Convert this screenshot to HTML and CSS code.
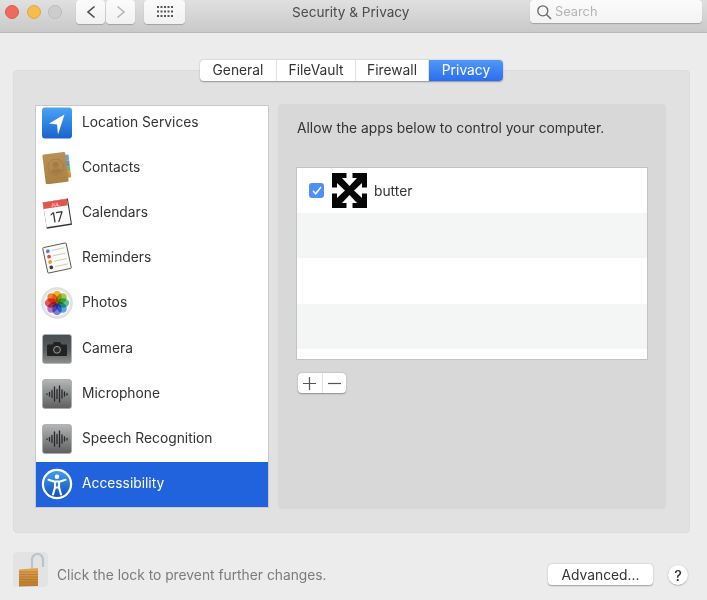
FILE: index.html
```html
<!DOCTYPE html>
<html lang="en">
<head>
<meta charset="utf-8">
<title>Security &amp; Privacy</title>
<link rel="stylesheet" href="styles.css">
</head>
<body>
<svg class="defs" width="0" height="0" aria-hidden="true">
  <defs>
    <linearGradient id="gBlue" x1="0" y1="0" x2="0" y2="1"><stop offset="0" stop-color="#4aa3f4"/><stop offset="1" stop-color="#1a62cf"/></linearGradient>
    <linearGradient id="gBook" x1="0" y1="0" x2="0" y2="1"><stop offset="0" stop-color="#b89159"/><stop offset="1" stop-color="#ab8143"/></linearGradient>
    <linearGradient id="gCam" x1="0" y1="0" x2="0" y2="1"><stop offset="0" stop-color="#474e52"/><stop offset=".55" stop-color="#5a5c5d"/><stop offset="1" stop-color="#8e8e8e"/></linearGradient>
    <linearGradient id="gMic" x1="0" y1="0" x2="0" y2="1"><stop offset="0" stop-color="#b4b6b7"/><stop offset="1" stop-color="#5e5e5e"/></linearGradient>
    <linearGradient id="gAcc" x1="0" y1="0" x2="0" y2="1"><stop offset="0" stop-color="#3f9bf2"/><stop offset="1" stop-color="#1552b8"/></linearGradient>
    <linearGradient id="gLock" x1="0" y1="0" x2="0" y2="1"><stop offset="0" stop-color="#e6a753"/><stop offset="1" stop-color="#b87a2c"/></linearGradient>
    <symbol id="mic" viewBox="0 0 32 32">
      <rect x="1.500" y="1.500" width="29" height="29" rx="2.500" fill="url(#gMic)" stroke="#a3a9ac" stroke-width=".8"/>
      <path d="M6 16v.5M8.500 14.500v3.500M11 12.500v7M13.500 9v14M16 11.500v9M18.500 8v16M21 12v8M23.500 14v4M26 15.500v1.500" stroke="#25282a" stroke-width="1.300" stroke-linecap="round" fill="none"/>
    </symbol>
  </defs>
</svg>

<div class="window">
  <header class="titlebar">
    <div class="lights">
      <span class="light red"></span>
      <span class="light yellow"></span>
      <span class="light grey"></span>
    </div>
    <div class="nav">
      <span class="tbtn nav-btn">
        <svg width="10" height="14" viewBox="0 0 10 14"><path d="M8.500 1.500 2 7l6.500 5.500" fill="none" stroke="#4a4a4a" stroke-width="1.600"/></svg>
      </span>
      <span class="tbtn nav-btn">
        <svg width="10" height="14" viewBox="0 0 10 14"><path d="M1.500 1.500 8 7l-6.500 5.500" fill="none" stroke="#b5b5b5" stroke-width="1.600"/></svg>
      </span>
    </div>
    <span class="tbtn grid-btn">
      <svg width="16" height="12" viewBox="0 0 16 12" fill="#555"><rect x="0" y="0" width="2" height="2"/><rect x="3.500" y="0" width="2" height="2"/><rect x="7" y="0" width="2" height="2"/><rect x="10.500" y="0" width="2" height="2"/><rect x="14" y="0" width="2" height="2"/><rect x="0" y="4.500" width="2" height="2"/><rect x="3.500" y="4.500" width="2" height="2"/><rect x="7" y="4.500" width="2" height="2"/><rect x="10.500" y="4.500" width="2" height="2"/><rect x="14" y="4.500" width="2" height="2"/><rect x="0" y="9" width="2" height="2"/><rect x="3.500" y="9" width="2" height="2"/><rect x="7" y="9" width="2" height="2"/><rect x="10.500" y="9" width="2" height="2"/><rect x="14" y="9" width="2" height="2"/></svg>
    </span>
    <h1 class="title">Security &amp; Privacy</h1>
    <div class="search">
      <svg width="16" height="16" viewBox="0 0 16 16"><circle cx="6.800" cy="6.800" r="5" fill="none" stroke="#666" stroke-width="1.300"/><path d="m10.500 10.500 4.500 4.500" stroke="#666" stroke-width="1.400"/></svg>
      <span>Search</span>
    </div>
  </header>

  <main class="content">
    <nav class="tabs">
      <span class="tab tab-general">General</span>
      <span class="tab tab-filevault">FileVault</span>
      <span class="tab tab-firewall">Firewall</span>
      <span class="tab tab-active">Privacy</span>
    </nav>

    <section class="panel">
      <div class="list">
        <ul class="list-inner">
          <li class="item">
            <svg class="icon" viewBox="0 0 32 32"><rect x="1" y=".5" width="30" height="31" rx="3" fill="url(#gBlue)"/><path d="M8 16.500 23.500 7.500 17 27.500l-1-10z" fill="#fff"/></svg>
            <span class="label">Location Services</span>
          </li>
          <li class="item">
            <svg class="icon" viewBox="0 0 32 32"><g transform="rotate(-7 16 16)"><path d="M25 4h4v6h-4z" fill="#6fa3c4"/><path d="M25 10h4v6h-4z" fill="#5f96b8"/><path d="M25 16h4v5h-4z" fill="#7bb05a"/><path d="M25 21h4v6h-4z" fill="#d98f35"/><rect x="3" y="1" width="23" height="30" rx="1.500" fill="url(#gBook)"/><circle cx="15" cy="15" r="8" fill="none" stroke="#a07c47" stroke-width=".8"/><circle cx="15" cy="12.500" r="3" fill="#a07c47"/><path d="M9.500 19.500c1-4 10-4 11 0a8 8 0 0 1-11 0z" fill="#a07c47"/></g></svg>
            <span class="label">Contacts</span>
          </li>
          <li class="item">
            <svg class="icon" viewBox="0 0 32 32"><g transform="rotate(-9 16 16)"><rect x="3.500" y="3.500" width="25.500" height="26.500" fill="#333"/><rect x="3.500" y="3.500" width="24.500" height="25" fill="#fbfbfb"/><rect x="3.500" y="3.500" width="24.500" height="6.500" fill="#e0554c"/><text x="15.500" y="9" class="cal-mon" text-anchor="middle">JUL</text><text x="15.500" y="25" class="cal-day" text-anchor="middle">17</text></g></svg>
            <span class="label">Calendars</span>
          </li>
          <li class="item">
            <svg class="icon" viewBox="0 0 32 32"><g transform="rotate(-12 16 16)"><rect x="4" y="3" width="24" height="26" rx="1" fill="#fbfbf6" stroke="#3f3f3f" stroke-width=".8"/><circle cx="8.500" cy="7.500" r="1.900" fill="#3d84ee"/><circle cx="8.500" cy="13" r="1.900" fill="#e8483c"/><circle cx="8.500" cy="18.500" r="1.900" fill="#eb9a30"/><circle cx="8.500" cy="24" r="1.900" fill="#3a3d44"/><path d="M12.500 7.500h13M12.500 13h13M12.500 18.500h13M12.500 24h13" stroke="#bbb" stroke-width=".7"/></g></svg>
            <span class="label">Reminders</span>
          </li>
          <li class="item">
            <svg class="icon" viewBox="0 0 32 32"><circle cx="16" cy="16" r="15.500" fill="#e4e4e4" stroke="#d0d0d0" stroke-width=".5"/><circle cx="16" cy="16" r="13" fill="#f8f8f8"/><ellipse class="petal" cx="16" cy="9.800" rx="4.700" ry="6" fill="#f7b731"/><ellipse class="petal" cx="16" cy="9.800" rx="4.700" ry="6" fill="#a4cf4a" transform="rotate(45 16 16)"/><ellipse class="petal" cx="16" cy="9.800" rx="4.700" ry="6" fill="#62c69c" transform="rotate(90 16 16)"/><ellipse class="petal" cx="16" cy="9.800" rx="4.700" ry="6" fill="#55aee6" transform="rotate(135 16 16)"/><ellipse class="petal" cx="16" cy="9.800" rx="4.700" ry="6" fill="#7b87dc" transform="rotate(180 16 16)"/><ellipse class="petal" cx="16" cy="9.800" rx="4.700" ry="6" fill="#b47ccc" transform="rotate(225 16 16)"/><ellipse class="petal" cx="16" cy="9.800" rx="4.700" ry="6" fill="#ea5a5c" transform="rotate(270 16 16)"/><ellipse class="petal" cx="16" cy="9.800" rx="4.700" ry="6" fill="#f2873a" transform="rotate(315 16 16)"/></svg>
            <span class="label">Photos</span>
          </li>
          <li class="item">
            <svg class="icon" viewBox="0 0 32 32"><rect x="1.500" y="1.500" width="29" height="29" rx="2.500" fill="url(#gCam)" stroke="#a8b6bd" stroke-width=".8"/><path d="M7 11.500h4.500L13 9h6l1.500 2.500H25a1 1 0 0 1 1 1V22a1 1 0 0 1-1 1H7a1 1 0 0 1-1-1v-9.500a1 1 0 0 1 1-1z" fill="#222"/><circle cx="16" cy="16.800" r="3.400" fill="#2c2c2c" stroke="#9a9a9a" stroke-width="1"/></svg>
            <span class="label">Camera</span>
          </li>
          <li class="item">
            <svg class="icon"><use href="#mic"/></svg>
            <span class="label">Microphone</span>
          </li>
          <li class="item">
            <svg class="icon"><use href="#mic"/></svg>
            <span class="label">Speech Recognition</span>
          </li>
          <li class="item item-selected">
            <svg class="icon" viewBox="0 0 32 32"><circle cx="16" cy="16" r="15.200" fill="#fff"/><circle cx="16" cy="16" r="13" fill="url(#gAcc)"/><circle cx="16" cy="8.800" r="2.300" fill="#fff"/><path d="M7.500 11.800 13 13.500h6l5.500-1.700M14 13.500v6l-2 7M18 13.500v6l2 7M14 19.500h4" stroke="#fff" stroke-width="2.100" fill="none" stroke-linecap="round" stroke-linejoin="round"/></svg>
            <span class="label">Accessibility</span>
          </li>
        </ul>
      </div>

      <div class="detail">
        <p class="detail-text">Allow the apps below to control your computer.</p>
        <div class="table">
          <div class="row row-app">
            <span class="check">
              <svg width="10" height="9" viewBox="0 0 10 9"><path d="M1 4.800 3.700 7.800 9 1" fill="none" stroke="#fff" stroke-width="1.500"/></svg>
            </span>
            <svg class="app-icon" viewBox="0 0 35 35"><rect width="35" height="35" fill="#050505"/><g fill="#fff"><path d="M0 14.500h5V10l8 7.500-8 7.500v-4.500H0z"/><path d="M35 14.500h-5V10l-8 7.500 8 7.500v-4.500h5z"/><path d="M14.500 0v5H10l7.500 8L25 5h-4.500V0z"/><path d="M14.500 35v-5H10l7.500-8 7.500 8h-4.500v5z"/></g></svg>
            <span>butter</span>
          </div>
          <div class="row row-alt"></div>
          <div class="row"></div>
          <div class="row row-alt"></div>
          <div class="row row-end"></div>
        </div>
        <div class="addremove">
          <span class="ar-btn">
            <svg width="13" height="13" viewBox="0 0 13 13"><path d="M6.500 0v13M0 6.500h13" stroke="#555" stroke-width="1.200"/></svg>
          </span>
          <span class="ar-btn">
            <svg width="13" height="13" viewBox="0 0 13 13"><path d="M0 6.500h13" stroke="#555" stroke-width="1.200"/></svg>
          </span>
        </div>
      </div>
    </section>

    <footer class="footer">
      <span class="lock">
        <svg width="35" height="35" viewBox="0 0 35 35"><path d="M19 17V7.500a5.500 5.500 0 0 1 11 0V15" fill="none" stroke="#b9c4cb" stroke-width="2.200"/><path d="M6 17.500 25 16v18l-19 .5z" fill="url(#gLock)"/><path d="M6 20h19M6 22.500h19M6 25h19M6 27.500h19M6 30h19" stroke="#a86f28" stroke-width=".6"/></svg>
      </span>
      <span class="lock-text">Click the lock to prevent further changes.</span>
      <span class="advanced">Advanced...</span>
      <span class="help">?</span>
    </footer>
  </main>
</div>
</body>
</html>
```

FILE: styles.css
```css
* { box-sizing: border-box; }
html, body { margin: 0; padding: 0; }
body {
  width: 707px;
  height: 600px;
  overflow: hidden;
  background: #ececec;
  font-family: "Inter", "Liberation Sans", sans-serif;
  color: #333;
}
.defs { display: block; height: 0; }
.window { display: flex; flex-direction: column; height: 600px; }

.titlebar {
  height: 33px;
  flex: none;
  display: flex;
  align-items: flex-start;
  padding: 0 5px;
  background: linear-gradient(#e0e0e0, #c9c9c9);
  border-bottom: 1px solid #b8b8b8;
}
.lights { display: flex; gap: 7.5px; width: 71px; margin-top: 5px; }
.light { width: 14px; height: 14px; border-radius: 50%; }
.red { background: #ee6a5f; border: 1px solid #dd5a50; }
.yellow { background: #f5bd4f; border: 1px solid #e0a83e; }
.grey { background: #cdcdcd; border: 1px solid #bcbcbc; }
.tbtn {
  height: 24px;
  background: linear-gradient(#fbfbfb, #f1f1f1);
  border-radius: 4px;
  box-shadow: 0 1px 1px rgba(0,0,0,.22);
  display: flex;
  align-items: center;
  justify-content: center;
}
.nav { display: flex; gap: 1px; }
.nav-btn { width: 29px; }
.grid-btn { width: 41px; margin-left: 9px; }
.title {
  margin: 4px 0 0 107px;
  font-size: 13.6px;
  line-height: 17px;
  font-weight: 400;
  color: #4b4b4b;
  white-space: nowrap;
  width: 131px;
}
.search {
  margin-left: auto;
  width: 172px;
  height: 23px;
  background: linear-gradient(#fbfbfb, #f3f3f3);
  border-radius: 4px;
  box-shadow: 0 1px 1px rgba(0,0,0,.22);
  display: flex;
  align-items: center;
  gap: 3px;
  padding-left: 6px;
  font-size: 12.8px;
  color: #b4b4b4;
}

.content { flex: 1; display: flex; flex-direction: column; padding-top: 27px; }
.tabs {
  align-self: flex-start;
  margin: 0 0 -11px 200px;
  height: 21px;
  display: flex;
  position: relative;
  z-index: 1;
  background: #fff;
  border-radius: 4px;
  box-shadow: 0 0.5px 1.5px rgba(0,0,0,.35);
  font-size: 13.8px;
}
.tab { display: flex; align-items: center; justify-content: center; padding-bottom: 2px; border-right: 1px solid #e2e2e2; color: #333; }
.tab-general { width: 77px; }
.tab-filevault { width: 79px; }
.tab-firewall { width: 73px; }
.tab-active {
  width: 74px;
  border: 0;
  border-radius: 0 4px 4px 0;
  color: #fff;
  background: linear-gradient(#5297f7, #2a6ef0);
}

.panel {
  margin: 0 17px 0 13px;
  height: 463px;
  flex: none;
  background: #e1e1e1;
  border: 1px solid #dcdcdc;
  border-radius: 4px;
  padding: 34px 23px 0 21px;
  display: flex;
  align-items: flex-start;
  gap: 9px;
}
.list {
  width: 234px;
  height: 403px;
  background: #fff;
  border: 1px solid #c9c9c9;
  overflow: hidden;
}
.list-inner { list-style: none; margin: -6px 0 0; padding: 0; }
.item {
  height: 45.2px;
  display: flex;
  align-items: center;
  gap: 9px;
  padding-left: 5px;
  font-size: 13.8px;
  color: #333;
  white-space: nowrap;
}
.label { margin-top: -2px; }
.item-selected { background: #2163dc; color: #fff; }
.icon { width: 32px; height: 32px; flex: none; }
.petal { mix-blend-mode: multiply; }
.cal-mon { font: 4.5px "Inter", sans-serif; fill: #fff; }
.cal-day { font: 14px "Inter", sans-serif; fill: #333; }

.detail {
  width: 388px;
  height: 405px;
  margin-top: -1px;
  background: #d8d8d8;
  border-radius: 4px;
  padding: 16px 18px 0;
}
.detail-text { margin: 0 0 31px 1px; font-size: 13.8px; line-height: 16px; color: #333; white-space: nowrap; }
.table { width: 352px; height: 193px; background: #fff; border: 1px solid #c3c3c3; overflow: hidden; }
.row { height: 45.2px; background: #fff; }
.row-alt { background: #f4f5f5; }
.row-end { height: 9px; }
.row-app {
  display: flex;
  align-items: center;
  padding-left: 12px;
  font-size: 13.8px;
  color: #333;
}
.check {
  width: 15px;
  height: 15px;
  border-radius: 3px;
  background: #4f8ff7;
  display: flex;
  align-items: center;
  justify-content: center;
  margin-right: 8px;
}
.app-icon { width: 35px; height: 35px; margin-right: 7px; flex: none; }
.addremove {
  margin: 13px 0 0 2px;
  display: flex;
  width: 48px;
  height: 20px;
  background: #fff;
  border-radius: 4px;
  box-shadow: 0 0.5px 1.5px rgba(0,0,0,.35);
}
.ar-btn { flex: 1; display: flex; align-items: center; justify-content: center; }
.ar-btn + .ar-btn { border-left: 1px solid #e2e2e2; }

.footer {
  display: flex;
  align-items: flex-end;
  margin-top: 19px;
  padding-left: 13px;
  height: 35px;
  font-size: 13.8px;
}
.lock {
  width: 35px;
  height: 35px;
  background: #e3e3e3;
  border-radius: 4px;
  display: flex;
  margin-right: 9px;
}
.lock-text { color: #7b7b7b; white-space: nowrap; line-height: 21px; margin-bottom: 1px; }
.advanced {
  margin: 0 0 2px auto;
  width: 105px;
  height: 21px;
  display: flex;
  align-items: center;
  justify-content: center;
  background: #fff;
  border-radius: 4px;
  box-shadow: 0 0.5px 1.5px rgba(0,0,0,.35);
  color: #333;
}
.help {
  margin: 0 19px 2px 15px;
  width: 20px;
  height: 20px;
  border-radius: 50%;
  background: #fff;
  box-shadow: 0 0.5px 1.5px rgba(0,0,0,.35);
  display: flex;
  align-items: center;
  justify-content: center;
  color: #333;
  font-size: 14.5px;
  font-weight: 500;
}
```
